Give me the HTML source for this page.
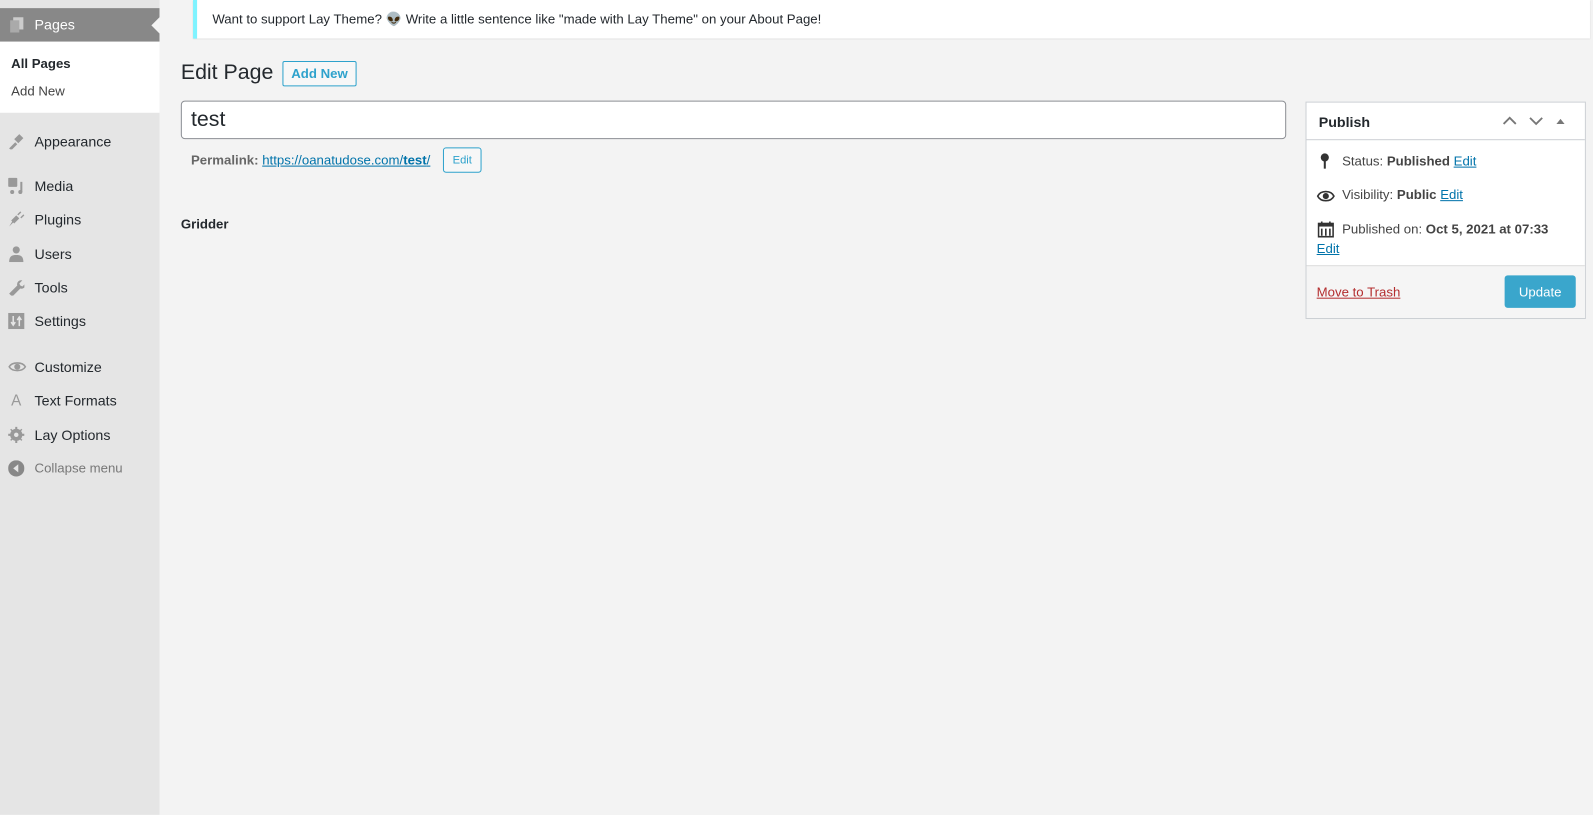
<!DOCTYPE html>
<html><head><meta charset="utf-8"><style>
*{box-sizing:border-box;margin:0;padding:0}
html,body{width:1593px;height:815px;overflow:hidden;background:#f3f3f3}
#w{position:absolute;left:0;top:0;width:1568px;height:802px;transform:scale(1.01595);transform-origin:0 0;font-family:"Liberation Sans",Arial,sans-serif;font-size:13px;color:#23282d}
#side{position:absolute;left:0;top:0;width:157px;height:802px;background:#e5e5e5}
.cur{position:absolute;left:0;top:8px;width:157px;height:33px;background:#888;color:#fff;font-size:14px}
.cur span{position:absolute;left:34px;top:8px}
.cur:after{content:"";position:absolute;right:0;top:9px;border:8px solid transparent;border-right-color:#f3f3f3}
.sub{position:absolute;left:0;top:41px;width:157px;height:70px;background:#fff}
.sub div{position:absolute;left:11px;font-size:13px}
.mi{position:absolute;left:34px;font-size:14px;color:#23282d}
.ic{position:absolute;left:8px;width:16px;height:16px;fill:#999}
a{color:#0073aa;text-decoration:underline}
.notice{position:absolute;left:190px;top:0;width:1375px;height:38px;background:#fff;border-left:4px solid #7ff3ff;box-shadow:0 1px 1px rgba(0,0,0,.15);font-size:13px}
.notice span{position:absolute;left:15px;top:11px}
h1{position:absolute;left:178px;top:60px;font-size:21px;font-weight:400}
.an{position:absolute;left:278px;top:60px;width:73px;height:25px;border:1px solid #2ea2cc;border-radius:2px;color:#2ea2cc;font-weight:bold;font-size:13px;display:flex;align-items:center;justify-content:center;background:#f7f7f7}
.title{position:absolute;left:178px;top:99px;width:1088px;height:38px;border:1px solid #8c8f94;border-radius:4px;background:#fff;font-size:21px;padding:6px 9px}
.perm{position:absolute;left:188px;top:150px;color:#666;font-weight:bold}
.perm a{font-weight:normal}
.eb{position:absolute;left:436px;top:145px;width:38px;height:25px;border:1px solid #2ea2cc;border-radius:3px;font-size:11px;color:#2ea2cc;display:flex;align-items:center;justify-content:center;background:#f7f7f7}
.grid{position:absolute;left:178px;top:213px;font-weight:bold}
.box{position:absolute;left:1285px;top:100px;width:276px;height:214px;background:#fff;border:1px solid #ccd0d4}
.bh{height:37px;border-bottom:1px solid #ccd0d4;font-size:14px;font-weight:bold;padding:11px 12px}
.row{position:absolute;left:35px;color:#444}
.foot{position:absolute;left:0;bottom:0;width:274px;height:52px;background:#f5f5f5;border-top:1px solid #ddd}
.upd{position:absolute;right:9px;top:9px;width:70px;height:32px;background:#3aa6cc;border-radius:3px;color:#fff;font-size:13px;display:flex;align-items:center;justify-content:center}
</style></head><body><div id="w">
<div id="side">
<div class="cur"><svg class="ic" style="top:8px;fill:#ccc" viewBox="0 0 16 16"><rect x="5" y="1" width="10" height="12"/><rect x="2" y="4" width="9" height="12" fill="#aaa"/></svg><span>Pages</span></div>
<div class="sub"><div style="top:14px;font-weight:bold">All Pages</div><div style="top:41px;color:#444">Add New</div></div>
<svg class="ic" style="top:131px" viewBox="0 0 16 16"><path d="M1 15l6-6 2 2-6 6zM6 6l5-5 4 4-5 5z"/></svg><div class="mi" style="top:131px">Appearance</div>
<svg class="ic" style="top:175px" viewBox="0 0 16 16"><rect x="0" y="0" width="9" height="9" rx="1"/><circle cx="4" cy="14" r="2"/><rect x="12" y="4" width="2" height="10"/><circle cx="12" cy="14" r="2"/></svg><div class="mi" style="top:175px">Media</div>
<svg class="ic" style="top:208px" viewBox="0 0 16 16"><path d="M1 15l4-4 1 1 5-5-3-3-5 5 1 1zM9 3l3-3 1 1-3 3zM12 6l3-3 1 1-3 3z"/></svg><div class="mi" style="top:208px">Plugins</div>
<svg class="ic" style="top:242px" viewBox="0 0 16 16"><circle cx="8" cy="4" r="3.5"/><path d="M1 16c0-6 3-7 7-7s7 1 7 7z"/></svg><div class="mi" style="top:242px">Users</div>
<svg class="ic" style="top:275px" viewBox="0 0 16 16"><path d="M1 14l8-8a4 4 0 015-5l-3 3 1 2 2 1 3-3a4 4 0 01-5 5l-8 8z"/></svg><div class="mi" style="top:275px">Tools</div>
<svg class="ic" style="top:308px" viewBox="0 0 16 16"><rect x="0" y="0" width="16" height="16"/><path d="M5 3v8M3 9l2 3 2-3M11 13V5M9 7l2-3 2 3" stroke="#e5e5e5" stroke-width="1.5" fill="none"/></svg><div class="mi" style="top:308px">Settings</div>
<svg class="ic" style="top:353px;width:18px" viewBox="0 0 18 16"><path d="M1 8c3-5 13-5 16 0-3 5-13 5-16 0z" fill="none" stroke="#999" stroke-width="1.5"/><circle cx="9" cy="8" r="3"/></svg><div class="mi" style="top:353px">Customize</div>
<div style="position:absolute;left:11px;top:386px;color:#999;font-size:15px">A</div><div class="mi" style="top:386px">Text Formats</div>
<svg class="ic" style="top:420px" viewBox="0 0 16 16"><circle cx="8" cy="8" r="6"/><path d="M7 0h2v16H7zM0 7h16v2H0z"/><path d="M2 3l1-1 11 11-1 1zM13 2l1 1L3 14l-1-1z"/><circle cx="8" cy="8" r="2.2" fill="#e5e5e5"/></svg><div class="mi" style="top:420px">Lay Options</div>
<svg class="ic" style="top:453px" viewBox="0 0 16 16"><circle cx="8" cy="8" r="8" fill="#888"/><path d="M10 4v8L5 8z" fill="#e5e5e5"/></svg><div class="mi" style="top:453px;color:#777;font-size:13px">Collapse menu</div>
</div>
<div class="notice"><span>Want to support Lay Theme? 👽 Write a little sentence like "made with Lay Theme" on your About Page!</span></div>
<h1>Edit Page</h1><div class="an">Add New</div>
<div class="title">test</div>
<div class="perm">Permalink: <a>https://oanatudose.com/<b>test</b>/</a></div><div class="eb">Edit</div>
<div class="grid">Gridder</div>
<div class="box"><div class="bh">Publish</div>
<svg style="position:absolute;left:193px;top:11px" width="70" height="14" viewBox="0 0 70 14"><path d="M1 10l6-6 6 6M27 4l6 6 6-6" fill="none" stroke="#777" stroke-width="1.8"/><path d="M53 10l4-5 4 5z" fill="#777"/></svg>
<svg style="position:absolute;left:12px;top:49px" width="12" height="17" viewBox="0 0 12 17"><circle cx="6" cy="5" r="4" fill="#333"/><rect x="5" y="7" width="2" height="9" fill="#333"/></svg>
<div class="row" style="top:50px">Status: <b>Published</b> <a>Edit</a></div>
<svg style="position:absolute;left:10px;top:86px" width="18" height="12" viewBox="0 0 18 12"><path d="M1 6c3-6 13-6 16 0-3 6-13 6-16 0z" fill="none" stroke="#333" stroke-width="1.6"/><circle cx="9" cy="6" r="3" fill="#333"/></svg>
<div class="row" style="top:83px">Visibility: <b>Public</b> <a>Edit</a></div>
<svg style="position:absolute;left:11px;top:116px" width="16" height="17" viewBox="0 0 16 17"><rect x="0.8" y="3" width="14.4" height="13" fill="none" stroke="#333" stroke-width="1.6"/><rect x="1" y="3" width="14" height="3" fill="#333"/><path d="M4 1v4M12 1v4M4 8v7M8 8v7M12 8v7" stroke="#333" stroke-width="1.6"/></svg>
<div class="row" style="top:117px">Published on: <b>Oct 5, 2021 at 07:33</b></div>
<div style="position:absolute;left:10px;top:136px"><a>Edit</a></div>
<div class="foot"><a style="position:absolute;left:10px;top:18px;color:#b32d2e">Move to Trash</a><div class="upd">Update</div></div>
</div>
</div></body></html>
